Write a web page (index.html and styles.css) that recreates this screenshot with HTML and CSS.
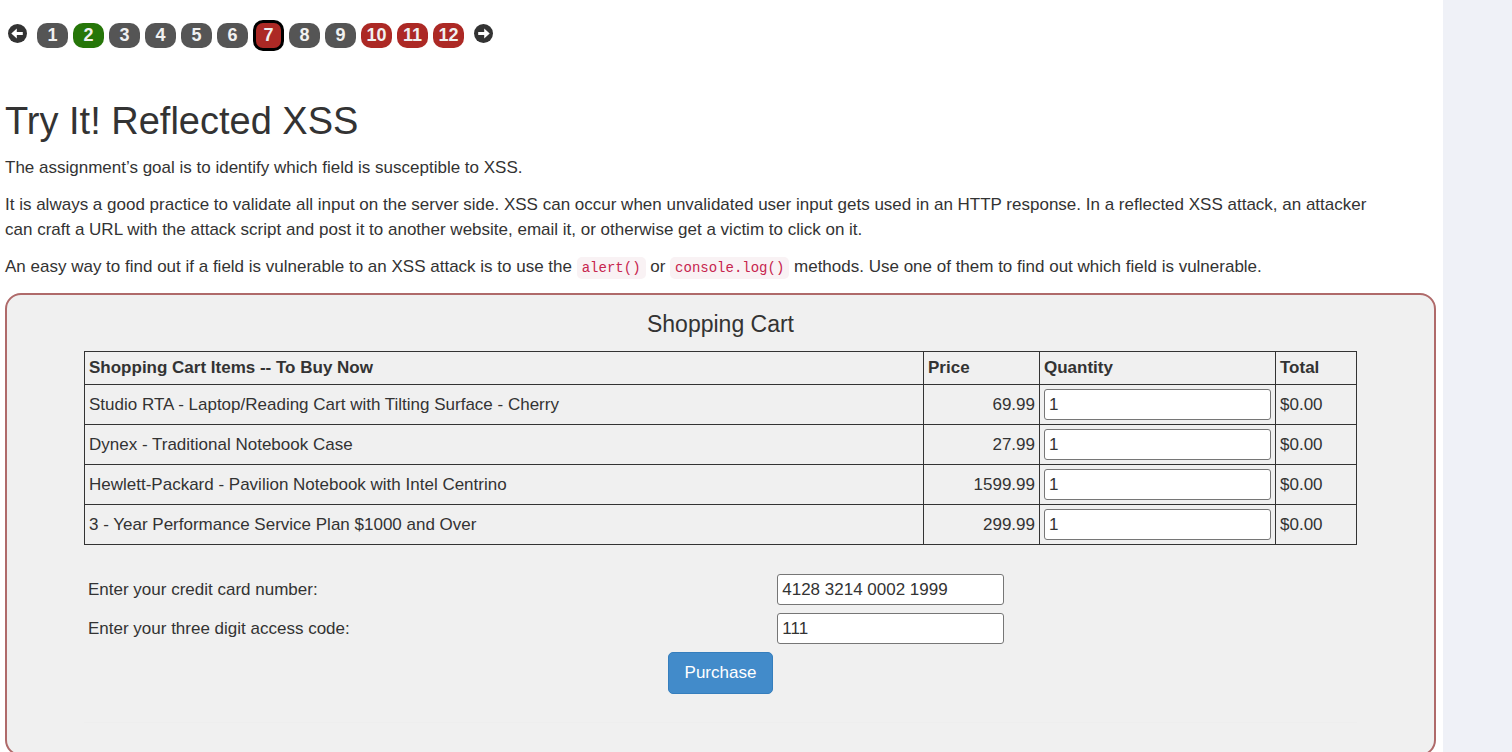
FILE: index.html
```
<!DOCTYPE html>
<html lang="en">
<head>
    <meta charset="UTF-8" />
    <meta name="viewport" content="width=device-width, initial-scale=1.0"/>
    <title>Try It! Reflected XSS</title>
    <link rel="stylesheet" href="styles.css">
</head>
<body>
    <main class="lesson">
        <nav class="pager" aria-label="Lesson pages">
            <a class="arrow" href="#" aria-label="Previous page">
                <svg width="19" height="19" viewBox="0 0 19 19">
                    <circle cx="9.5" cy="9.5" r="9.5" fill="#333"/>
                    <path d="M3.3 9.5L8.8 4.6V8H14.8V11H8.8V14.4Z" fill="#fff"/>
                </svg>
            </a>
            <a class="page" href="#">1</a>
            <a class="page solved" href="#">2</a>
            <a class="page" href="#">3</a>
            <a class="page" href="#">4</a>
            <a class="page" href="#">5</a>
            <a class="page" href="#">6</a>
            <a class="page assignment current" href="#">7</a>
            <a class="page" href="#">8</a>
            <a class="page" href="#">9</a>
            <a class="page assignment" href="#">10</a>
            <a class="page assignment" href="#">11</a>
            <a class="page assignment" href="#">12</a>
            <a class="arrow" href="#" aria-label="Next page">
                <svg width="19" height="19" viewBox="0 0 19 19">
                    <circle cx="9.5" cy="9.5" r="9.5" fill="#333"/>
                    <path d="M15.7 9.5L10.2 4.6V8H4.2V11H10.2V14.4Z" fill="#fff"/>
                </svg>
            </a>
        </nav>

        <h1>Try It! Reflected XSS</h1>
        <p>The assignment’s goal is to identify which field is susceptible to XSS.</p>
        <p>It is always a good practice to validate all input on the server side. XSS can occur when unvalidated user input gets used in an HTTP response. In a reflected XSS attack, an attacker<br>can craft a URL with the attack script and post it to another website, email it, or otherwise get a victim to click on it.</p>
        <p>An easy way to find out if a field is vulnerable to an XSS attack is to use the <code>alert()</code> or <code>console.log()</code> methods. Use one of them to find out which field is vulnerable.</p>

        <form class="attack-container">
            <h2>Shopping Cart</h2>
            <table class="cart">
                <thead>
                    <tr>
                        <th class="col-item">Shopping Cart Items -- To Buy Now</th>
                        <th class="col-price">Price</th>
                        <th class="col-qty">Quantity</th>
                        <th class="col-total">Total</th>
                    </tr>
                </thead>
                <tbody>
                    <tr>
                        <td>Studio RTA - Laptop/Reading Cart with Tilting Surface - Cherry</td>
                        <td class="price">69.99</td>
                        <td><input type="text" value="1" name="QTY1" aria-label="Quantity"></td>
                        <td>$0.00</td>
                    </tr>
                    <tr>
                        <td>Dynex - Traditional Notebook Case</td>
                        <td class="price">27.99</td>
                        <td><input type="text" value="1" name="QTY2" aria-label="Quantity"></td>
                        <td>$0.00</td>
                    </tr>
                    <tr>
                        <td>Hewlett-Packard - Pavilion Notebook with Intel Centrino</td>
                        <td class="price">1599.99</td>
                        <td><input type="text" value="1" name="QTY3" aria-label="Quantity"></td>
                        <td>$0.00</td>
                    </tr>
                    <tr>
                        <td>3 - Year Performance Service Plan $1000 and Over</td>
                        <td class="price">299.99</td>
                        <td><input type="text" value="1" name="QTY4" aria-label="Quantity"></td>
                        <td>$0.00</td>
                    </tr>
                </tbody>
            </table>

            <div class="payment">
                <label for="card">Enter your credit card number:</label>
                <input type="text" id="card" name="field1" value="4128 3214 0002 1999">
                <label for="code">Enter your three digit access code:</label>
                <input type="text" id="code" name="field2" value="111">
            </div>
            <button type="button" class="btn">Purchase</button>
            <hr>
        </form>
    </main>
</body>
</html>
```
FILE: styles.css
```
* {
    box-sizing: border-box;
}
body {
    margin: 0;
    padding-right: 69px;
    background: #eff1f7;
    color: #333;
    font-family: "Liberation Sans", Arial, sans-serif;
    font-size: 17px;
    line-height: 25px;
}
.lesson {
    min-height: 100vh;
    padding: 20px 7px 0 5px;
    background: #fff;
}

/* page numbers */
.pager {
    display: flex;
    align-items: center;
    gap: 5px;
    height: 31px;
    padding-left: 3px;
}
.arrow {
    display: flex;
    padding-bottom: 4px;
}
.arrow:first-child {
    margin-right: 5px;
}
.arrow:last-child {
    margin-left: 5px;
}
.page {
    width: 31px;
    height: 25px;
    border-radius: 10px;
    background: #555;
    color: #f1f1f1;
    font-size: 18px;
    font-weight: bold;
    text-align: center;
    text-decoration: none;
}
.solved {
    background: #267609;
}
.assignment {
    background: #ac2925;
}
.current {
    height: 31px;
    border: 3px solid #000;
}

h1 {
    margin: 48px 0 12px;
    font-size: 38px;
    font-weight: normal;
    line-height: 44px;
}
p {
    margin: 0 0 12px;
}
code {
    padding: 3px 5px;
    border-radius: 5px;
    background: #f9f2f4;
    color: #c7254e;
    font-family: Consolas, "Liberation Mono", monospace;
    font-size: 14px;
}

/* assignment box */
.attack-container {
    padding: 16px 77px 31px;
    border: 2px solid #af6a6a;
    border-radius: 16px;
    background: #f0f0f0;
}
h2 {
    margin: 0 0 14px;
    font-size: 23px;
    font-weight: normal;
    line-height: 26px;
    text-align: center;
}
.cart {
    width: 100%;
    border-collapse: collapse;
    table-layout: fixed;
}
.cart th,
.cart td {
    height: 40px;
    padding: 4px;
    border: 1px solid #333;
    text-align: left;
}
.cart th {
    height: 33px;
    padding: 3px 4px;
    vertical-align: top;
}
.cart td.price {
    text-align: right;
}
.col-price {
    width: 116px;
}
.col-qty {
    width: 236px;
}
.col-total {
    width: 81px;
}
input {
    display: block;
    width: 227px;
    height: 31px;
    padding: 1px 4px;
    border: 1px solid #767676;
    border-radius: 3px;
    background: #fff;
    color: #333;
    font: inherit;
}
.payment {
    display: grid;
    grid-template-columns: 54% auto;
    gap: 8px 4px;
    align-items: center;
    margin: 29px 0 8px;
    padding-left: 4px;
}
.btn {
    display: block;
    margin: 0 auto;
    padding: 7px 16px;
    border: 1px solid #357ebd;
    border-radius: 5px;
    background: #428bca;
    color: #fff;
    font: inherit;
    line-height: 26px;
}
hr {
    margin: 28px 0 0;
    border: 0;
    border-top: 1px solid #eee;
}
```
